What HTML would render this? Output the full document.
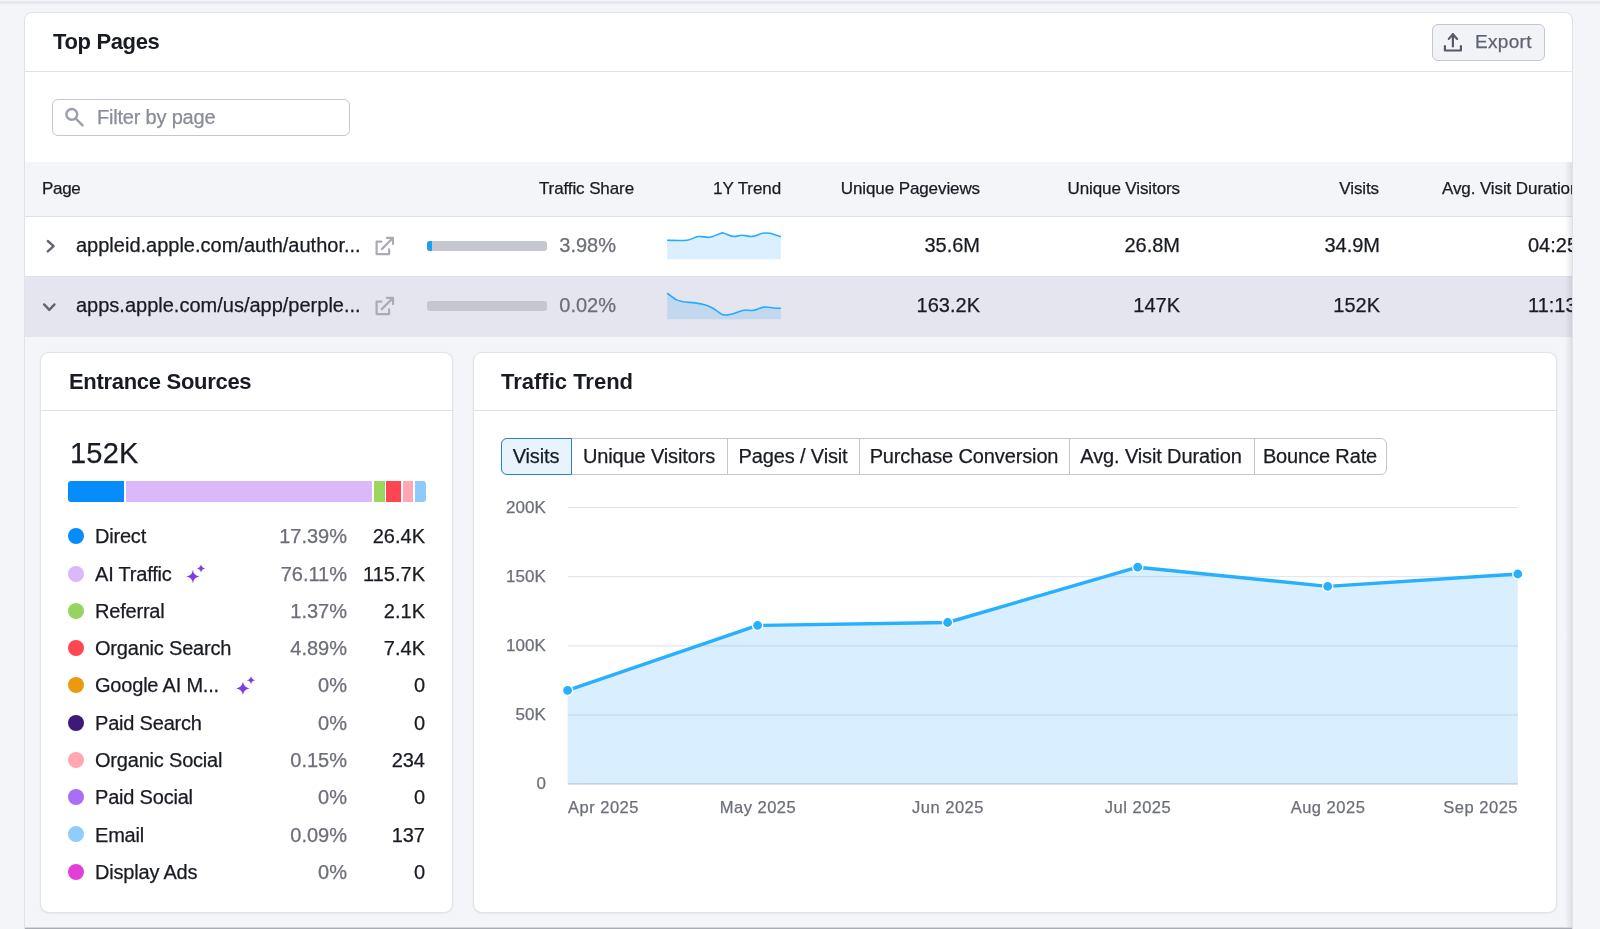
<!DOCTYPE html><html><head><meta charset="utf-8"><title>Top Pages</title><style>
html,body{margin:0;padding:0;} body{width:1600px;height:929px;overflow:hidden;position:relative;background:#f4f5f9;font-family:"Liberation Sans", sans-serif;}
.t{position:absolute;white-space:nowrap;will-change:transform;}
svg{position:absolute;left:0;top:0;overflow:visible;}
</style></head><body>
<div style="position:absolute;left:0px;top:1px;width:1600px;height:1px;background:#e9eaef;"></div>
<div style="position:absolute;left:0px;top:2px;width:1600px;height:1px;background:#e2e3e8;"></div>
<div style="position:absolute;left:0px;top:3px;width:1600px;height:2px;background:linear-gradient(#e8e9ee,#f4f5f9);"></div>
<div style="position:absolute;left:24px;top:12px;width:1549px;height:1000px;box-sizing:border-box;background:#fff;border:1px solid #e0e1e9;border-radius:8px;"></div>
<div style="position:absolute;left:25px;top:71px;width:1547px;height:1px;background:#e0e1e9;"></div>
<div class="t" style="left:52.70px;top:31.10px;font-size:22px;line-height:22px;color:#191b23;font-weight:bold;letter-spacing:-0.35px;">Top Pages</div>
<div style="position:absolute;left:1432px;top:24px;width:113px;height:37px;box-sizing:border-box;background:#f2f3f6;border:1px solid #c4c7cf;border-radius:6px;"></div>
<div class="t" style="left:1475.30px;top:31.95px;font-size:19px;line-height:19px;color:#5f6270;-webkit-text-stroke:0.25px currentColor;letter-spacing:0.3px;">Export</div>
<svg width="1600" height="929" style="pointer-events:none"><g fill="none" stroke="#575a68" stroke-width="2.2" stroke-linecap="round" stroke-linejoin="round"><path d="M1452.9 46.5V34.2M1448.8 38.9L1452.9 34.2L1457.1 38.9"/><path d="M1444.9 46.2V50.5H1460.9V46.2"/></g></svg>
<div style="position:absolute;left:52px;top:99px;width:298px;height:37px;box-sizing:border-box;background:#fff;border:1px solid #c4c7cf;border-radius:6px;"></div>
<div class="t" style="left:97.00px;top:107.00px;font-size:20px;line-height:20px;color:#898c99;-webkit-text-stroke:0.25px currentColor;letter-spacing:-0.2px;">Filter by page</div>
<svg width="1600" height="929"><g fill="none" stroke="#9c9eab" stroke-width="2.4" stroke-linecap="round"><circle cx="71.8" cy="114.4" r="5.4"/><path d="M76.3 119.2L82.6 125.4"/></g></svg>
<div style="position:absolute;left:0;top:0;width:1572px;height:929px;overflow:hidden;">
<div style="position:absolute;left:25px;top:162px;width:1547px;height:54px;background:#f4f5f9;"></div>
<div style="position:absolute;left:25px;top:216px;width:1547px;height:1px;background:#e0e1e9;"></div>
<div style="position:absolute;left:25px;top:217px;width:1547px;height:59px;background:#fff;"></div>
<div style="position:absolute;left:25px;top:276px;width:1547px;height:1px;background:#dedfe7;"></div>
<div style="position:absolute;left:25px;top:277px;width:1547px;height:60px;background:#e4e5ee;"></div>
<div style="position:absolute;left:25px;top:337px;width:1547px;height:590px;background:#f4f5f9;"></div>
<div class="t" style="left:42.00px;top:179.85px;font-size:17px;line-height:17px;color:#191b23;-webkit-text-stroke:0.25px currentColor;letter-spacing:-0.3px;">Page</div>
<div class="t" style="left:34.40px;width:600px;text-align:right;top:179.85px;font-size:17px;line-height:17px;color:#191b23;-webkit-text-stroke:0.25px currentColor;letter-spacing:-0.1px;">Traffic Share</div>
<div class="t" style="left:180.90px;width:600px;text-align:right;top:179.85px;font-size:17px;line-height:17px;color:#191b23;-webkit-text-stroke:0.25px currentColor;letter-spacing:-0.1px;">1Y Trend</div>
<div class="t" style="left:380.40px;width:600px;text-align:right;top:179.85px;font-size:17px;line-height:17px;color:#191b23;-webkit-text-stroke:0.25px currentColor;letter-spacing:-0.1px;">Unique Pageviews</div>
<div class="t" style="left:579.90px;width:600px;text-align:right;top:179.85px;font-size:17px;line-height:17px;color:#191b23;-webkit-text-stroke:0.25px currentColor;letter-spacing:-0.1px;">Unique Visitors</div>
<div class="t" style="left:779.40px;width:600px;text-align:right;top:179.85px;font-size:17px;line-height:17px;color:#191b23;-webkit-text-stroke:0.25px currentColor;letter-spacing:-0.1px;">Visits</div>
<div class="t" style="left:1442.00px;top:179.85px;font-size:17px;line-height:17px;color:#191b23;-webkit-text-stroke:0.25px currentColor;letter-spacing:-0.1px;">Avg. Visit Duration</div>
<div class="t" style="left:76.00px;top:235.20px;font-size:20px;line-height:20px;color:#191b23;-webkit-text-stroke:0.25px currentColor;">appleid.apple.com/auth/author...</div>
<div class="t" style="left:15.50px;width:600px;text-align:right;top:235.20px;font-size:20px;line-height:20px;color:#6c6e79;-webkit-text-stroke:0.25px currentColor;">3.98%</div>
<div class="t" style="left:379.50px;width:600px;text-align:right;top:235.20px;font-size:20px;line-height:20px;color:#191b23;-webkit-text-stroke:0.25px currentColor;">35.6M</div>
<div class="t" style="left:580.00px;width:600px;text-align:right;top:235.20px;font-size:20px;line-height:20px;color:#191b23;-webkit-text-stroke:0.25px currentColor;">26.8M</div>
<div class="t" style="left:779.50px;width:600px;text-align:right;top:235.20px;font-size:20px;line-height:20px;color:#191b23;-webkit-text-stroke:0.25px currentColor;">34.9M</div>
<div class="t" style="left:1527.50px;top:235.20px;font-size:20px;line-height:20px;color:#191b23;-webkit-text-stroke:0.25px currentColor;">04:25</div>
<div class="t" style="left:76.00px;top:295.10px;font-size:20px;line-height:20px;color:#191b23;-webkit-text-stroke:0.25px currentColor;">apps.apple.com/us/app/perple...</div>
<div class="t" style="left:15.50px;width:600px;text-align:right;top:295.10px;font-size:20px;line-height:20px;color:#6c6e79;-webkit-text-stroke:0.25px currentColor;">0.02%</div>
<div class="t" style="left:379.50px;width:600px;text-align:right;top:295.10px;font-size:20px;line-height:20px;color:#191b23;-webkit-text-stroke:0.25px currentColor;">163.2K</div>
<div class="t" style="left:580.00px;width:600px;text-align:right;top:295.10px;font-size:20px;line-height:20px;color:#191b23;-webkit-text-stroke:0.25px currentColor;">147K</div>
<div class="t" style="left:779.50px;width:600px;text-align:right;top:295.10px;font-size:20px;line-height:20px;color:#191b23;-webkit-text-stroke:0.25px currentColor;">152K</div>
<div class="t" style="left:1527.50px;top:295.10px;font-size:20px;line-height:20px;color:#191b23;-webkit-text-stroke:0.25px currentColor;">11:13</div>
<div style="position:absolute;left:427px;top:241px;width:120px;height:10px;background:#c4c7cf;border-radius:3px;"></div>
<div style="position:absolute;left:427px;top:241px;width:5px;height:10px;background:#1d9ff5;border-radius:3px 0 0 3px;"></div>
<div style="position:absolute;left:427px;top:301px;width:120px;height:10px;background:#c4c7cf;border-radius:3px;"></div>
<svg width="1600" height="929"><g fill="none" stroke="#62656f" stroke-width="2.4" stroke-linecap="round" stroke-linejoin="round"><path d="M47.8 241L53.6 246.2L47.8 251.4"/><path d="M44.1 304.4L49.3 309.9L54.5 304.4"/></g><g fill="none" stroke="#a9abb6" stroke-width="2.2" stroke-linecap="round" stroke-linejoin="round" transform="translate(0 0)"><path d="M381.5 241.6H376.6V254.1H389.1V249.4"/><path d="M381.8 249.1L392.6 238.3M386.9 237.9H393V244"/></g><g fill="none" stroke="#a9abb6" stroke-width="2.2" stroke-linecap="round" stroke-linejoin="round" transform="translate(0 60)"><path d="M381.5 241.6H376.6V254.1H389.1V249.4"/><path d="M381.8 249.1L392.6 238.3M386.9 237.9H393V244"/></g><path d="M667.1 240.3 C670.4 240.3 681.6 240.9 686.8 240.3 C692.0 239.7 694.4 237.0 698.2 236.5 C702.0 236.0 705.8 237.8 709.6 237.3 C713.4 236.8 718.5 234.0 720.9 233.3 C723.3 232.6 722.2 232.8 724.2 233.3 C726.2 233.8 730.1 236.1 733.1 236.4 C736.1 236.7 738.8 235.3 742.0 235.3 C745.2 235.3 749.2 236.7 752.6 236.4 C756.0 236.1 759.5 233.8 762.4 233.3 C765.2 232.8 766.6 232.7 769.7 233.3 C772.8 233.9 779.0 236.2 780.9 236.8 L780.9 259.2 L667.1 259.2 Z" fill="rgba(0,143,248,0.14)"/><path d="M667.1 240.3 C670.4 240.3 681.6 240.9 686.8 240.3 C692.0 239.7 694.4 237.0 698.2 236.5 C702.0 236.0 705.8 237.8 709.6 237.3 C713.4 236.8 718.5 234.0 720.9 233.3 C723.3 232.6 722.2 232.8 724.2 233.3 C726.2 233.8 730.1 236.1 733.1 236.4 C736.1 236.7 738.8 235.3 742.0 235.3 C745.2 235.3 749.2 236.7 752.6 236.4 C756.0 236.1 759.5 233.8 762.4 233.3 C765.2 232.8 766.6 232.7 769.7 233.3 C772.8 233.9 779.0 236.2 780.9 236.8" fill="none" stroke="#22aefc" stroke-width="1.6"/><path d="M667.1 293.1 C668.6 294.2 673.5 298.2 676.2 299.6 C679.0 301.0 680.5 301.1 683.6 301.7 C686.7 302.2 691.2 302.4 694.9 302.9 C698.5 303.4 702.6 304.1 705.5 304.9 C708.4 305.7 709.3 306.1 712.0 307.7 C714.7 309.2 719.1 313.0 721.7 314.2 C724.3 315.4 725.5 315.0 727.4 314.9 C729.3 314.8 730.4 314.6 733.1 313.8 C735.8 313.0 740.3 310.8 743.7 310.2 C747.1 309.6 750.0 310.9 753.4 310.4 C756.8 309.9 760.6 307.5 764.0 307.1 C767.4 306.7 770.9 307.8 773.7 308.0 C776.5 308.2 779.7 308.2 780.9 308.2 L780.9 319.2 L667.1 319.2 Z" fill="rgba(0,143,248,0.14)"/><path d="M667.1 293.1 C668.6 294.2 673.5 298.2 676.2 299.6 C679.0 301.0 680.5 301.1 683.6 301.7 C686.7 302.2 691.2 302.4 694.9 302.9 C698.5 303.4 702.6 304.1 705.5 304.9 C708.4 305.7 709.3 306.1 712.0 307.7 C714.7 309.2 719.1 313.0 721.7 314.2 C724.3 315.4 725.5 315.0 727.4 314.9 C729.3 314.8 730.4 314.6 733.1 313.8 C735.8 313.0 740.3 310.8 743.7 310.2 C747.1 309.6 750.0 310.9 753.4 310.4 C756.8 309.9 760.6 307.5 764.0 307.1 C767.4 306.7 770.9 307.8 773.7 308.0 C776.5 308.2 779.7 308.2 780.9 308.2" fill="none" stroke="#22aefc" stroke-width="1.6"/></svg>
<div style="position:absolute;left:1565px;top:162px;width:7px;height:765px;background:linear-gradient(to right, rgba(25,27,35,0), rgba(25,27,35,0.10));"></div>
</div>
<div style="position:absolute;left:25px;top:927px;width:1547px;height:1px;background:#d5d6de;"></div>
<div style="position:absolute;left:25px;top:928px;width:1547px;height:1px;background:#a9abb6;"></div>
<div style="position:absolute;left:40px;top:352px;width:413px;height:561px;box-sizing:border-box;background:#fff;border:1px solid #e2e3e9;border-radius:9px;box-shadow:0 0 1px rgba(25,27,35,0.10), 0 1px 2px rgba(25,27,35,0.05);"></div>
<div style="position:absolute;left:41px;top:410px;width:411px;height:1px;background:#e0e1e9;"></div>
<div class="t" style="left:69.00px;top:370.90px;font-size:22px;line-height:22px;color:#191b23;font-weight:bold;letter-spacing:-0.3px;">Entrance Sources</div>
<div class="t" style="left:69.50px;top:439.05px;font-size:29px;line-height:29px;color:#191b23;-webkit-text-stroke:0.25px currentColor;letter-spacing:0.2px;">152K</div>
<div style="position:absolute;left:68px;top:481px;width:56.3px;height:20.5px;background:#078cfb;border-radius:3px 0 0 3px;"></div>
<div style="position:absolute;left:126px;top:481px;width:246px;height:20.5px;background:#dab8fa;border-radius:0;"></div>
<div style="position:absolute;left:373.5px;top:481px;width:11.0px;height:20.5px;background:#9ad85d;border-radius:0;"></div>
<div style="position:absolute;left:386px;top:481px;width:15px;height:20.5px;background:#ff4554;border-radius:0;"></div>
<div style="position:absolute;left:403px;top:481px;width:10px;height:20.5px;background:#ffa8b1;border-radius:0;"></div>
<div style="position:absolute;left:414.8px;top:481px;width:11.0px;height:20.5px;background:#8ecbfd;border-radius:0 3px 3px 0;"></div>
<div style="position:absolute;left:68px;top:528.25px;width:16px;height:16px;background:#078cfb;border-radius:50%;"></div>
<div class="t" style="left:95.00px;top:526.45px;font-size:20px;line-height:20px;color:#191b23;-webkit-text-stroke:0.25px currentColor;letter-spacing:-0.2px;">Direct</div>
<div class="t" style="left:-252.80px;width:600px;text-align:right;top:526.45px;font-size:20px;line-height:20px;color:#6c6e79;-webkit-text-stroke:0.25px currentColor;">17.39%</div>
<div class="t" style="left:-175.00px;width:600px;text-align:right;top:526.45px;font-size:20px;line-height:20px;color:#191b23;-webkit-text-stroke:0.25px currentColor;">26.4K</div>
<div style="position:absolute;left:68px;top:565.51px;width:16px;height:16px;background:#dab8fa;border-radius:50%;"></div>
<div class="t" style="left:95.00px;top:563.71px;font-size:20px;line-height:20px;color:#191b23;-webkit-text-stroke:0.25px currentColor;letter-spacing:-0.2px;">AI Traffic</div>
<div class="t" style="left:-252.80px;width:600px;text-align:right;top:563.71px;font-size:20px;line-height:20px;color:#6c6e79;-webkit-text-stroke:0.25px currentColor;">76.11%</div>
<div class="t" style="left:-175.00px;width:600px;text-align:right;top:563.71px;font-size:20px;line-height:20px;color:#191b23;-webkit-text-stroke:0.25px currentColor;">115.7K</div>
<div style="position:absolute;left:68px;top:602.77px;width:16px;height:16px;background:#95d45e;border-radius:50%;"></div>
<div class="t" style="left:95.00px;top:600.97px;font-size:20px;line-height:20px;color:#191b23;-webkit-text-stroke:0.25px currentColor;letter-spacing:-0.2px;">Referral</div>
<div class="t" style="left:-252.80px;width:600px;text-align:right;top:600.97px;font-size:20px;line-height:20px;color:#6c6e79;-webkit-text-stroke:0.25px currentColor;">1.37%</div>
<div class="t" style="left:-175.00px;width:600px;text-align:right;top:600.97px;font-size:20px;line-height:20px;color:#191b23;-webkit-text-stroke:0.25px currentColor;">2.1K</div>
<div style="position:absolute;left:68px;top:640.03px;width:16px;height:16px;background:#ff4753;border-radius:50%;"></div>
<div class="t" style="left:95.00px;top:638.23px;font-size:20px;line-height:20px;color:#191b23;-webkit-text-stroke:0.25px currentColor;letter-spacing:-0.2px;">Organic Search</div>
<div class="t" style="left:-252.80px;width:600px;text-align:right;top:638.23px;font-size:20px;line-height:20px;color:#6c6e79;-webkit-text-stroke:0.25px currentColor;">4.89%</div>
<div class="t" style="left:-175.00px;width:600px;text-align:right;top:638.23px;font-size:20px;line-height:20px;color:#191b23;-webkit-text-stroke:0.25px currentColor;">7.4K</div>
<div style="position:absolute;left:68px;top:677.29px;width:16px;height:16px;background:#ea9a0c;border-radius:50%;"></div>
<div class="t" style="left:95.00px;top:675.49px;font-size:20px;line-height:20px;color:#191b23;-webkit-text-stroke:0.25px currentColor;letter-spacing:-0.2px;">Google AI M...</div>
<div class="t" style="left:-252.80px;width:600px;text-align:right;top:675.49px;font-size:20px;line-height:20px;color:#6c6e79;-webkit-text-stroke:0.25px currentColor;">0%</div>
<div class="t" style="left:-175.00px;width:600px;text-align:right;top:675.49px;font-size:20px;line-height:20px;color:#191b23;-webkit-text-stroke:0.25px currentColor;">0</div>
<div style="position:absolute;left:68px;top:714.55px;width:16px;height:16px;background:#3d1a7a;border-radius:50%;"></div>
<div class="t" style="left:95.00px;top:712.75px;font-size:20px;line-height:20px;color:#191b23;-webkit-text-stroke:0.25px currentColor;letter-spacing:-0.2px;">Paid Search</div>
<div class="t" style="left:-252.80px;width:600px;text-align:right;top:712.75px;font-size:20px;line-height:20px;color:#6c6e79;-webkit-text-stroke:0.25px currentColor;">0%</div>
<div class="t" style="left:-175.00px;width:600px;text-align:right;top:712.75px;font-size:20px;line-height:20px;color:#191b23;-webkit-text-stroke:0.25px currentColor;">0</div>
<div style="position:absolute;left:68px;top:751.81px;width:16px;height:16px;background:#ffa8ae;border-radius:50%;"></div>
<div class="t" style="left:95.00px;top:750.01px;font-size:20px;line-height:20px;color:#191b23;-webkit-text-stroke:0.25px currentColor;letter-spacing:-0.2px;">Organic Social</div>
<div class="t" style="left:-252.80px;width:600px;text-align:right;top:750.01px;font-size:20px;line-height:20px;color:#6c6e79;-webkit-text-stroke:0.25px currentColor;">0.15%</div>
<div class="t" style="left:-175.00px;width:600px;text-align:right;top:750.01px;font-size:20px;line-height:20px;color:#191b23;-webkit-text-stroke:0.25px currentColor;">234</div>
<div style="position:absolute;left:68px;top:789.07px;width:16px;height:16px;background:#a86ef5;border-radius:50%;"></div>
<div class="t" style="left:95.00px;top:787.27px;font-size:20px;line-height:20px;color:#191b23;-webkit-text-stroke:0.25px currentColor;letter-spacing:-0.2px;">Paid Social</div>
<div class="t" style="left:-252.80px;width:600px;text-align:right;top:787.27px;font-size:20px;line-height:20px;color:#6c6e79;-webkit-text-stroke:0.25px currentColor;">0%</div>
<div class="t" style="left:-175.00px;width:600px;text-align:right;top:787.27px;font-size:20px;line-height:20px;color:#191b23;-webkit-text-stroke:0.25px currentColor;">0</div>
<div style="position:absolute;left:68px;top:826.33px;width:16px;height:16px;background:#8ecdfd;border-radius:50%;"></div>
<div class="t" style="left:95.00px;top:824.53px;font-size:20px;line-height:20px;color:#191b23;-webkit-text-stroke:0.25px currentColor;letter-spacing:-0.2px;">Email</div>
<div class="t" style="left:-252.80px;width:600px;text-align:right;top:824.53px;font-size:20px;line-height:20px;color:#6c6e79;-webkit-text-stroke:0.25px currentColor;">0.09%</div>
<div class="t" style="left:-175.00px;width:600px;text-align:right;top:824.53px;font-size:20px;line-height:20px;color:#191b23;-webkit-text-stroke:0.25px currentColor;">137</div>
<div style="position:absolute;left:68px;top:863.59px;width:16px;height:16px;background:#e040d8;border-radius:50%;"></div>
<div class="t" style="left:95.00px;top:861.79px;font-size:20px;line-height:20px;color:#191b23;-webkit-text-stroke:0.25px currentColor;letter-spacing:-0.2px;">Display Ads</div>
<div class="t" style="left:-252.80px;width:600px;text-align:right;top:861.79px;font-size:20px;line-height:20px;color:#6c6e79;-webkit-text-stroke:0.25px currentColor;">0%</div>
<div class="t" style="left:-175.00px;width:600px;text-align:right;top:861.79px;font-size:20px;line-height:20px;color:#191b23;-webkit-text-stroke:0.25px currentColor;">0</div>
<svg width="1600" height="929"><path fill="#7b3fe4" d="M192.9 570.01 Q193.824 575.686 199.5 576.61 Q193.824 577.534 192.9 583.21 Q191.976 577.534 186.3 576.61 Q191.976 575.686 192.9 570.01Z M201.0 564.31 Q201.588 567.922 205.2 568.51 Q201.588 569.098 201.0 572.71 Q200.412 569.098 196.8 568.51 Q200.412 567.922 201.0 564.31Z"/><path fill="#7b3fe4" d="M242.9 681.79 Q243.824 687.466 249.5 688.39 Q243.824 689.314 242.9 694.99 Q241.976 689.314 236.3 688.39 Q241.976 687.466 242.9 681.79Z M251.0 676.0899999999999 Q251.588 679.702 255.2 680.29 Q251.588 680.8779999999999 251.0 684.49 Q250.412 680.8779999999999 246.8 680.29 Q250.412 679.702 251.0 676.0899999999999Z"/></svg>
<div style="position:absolute;left:473px;top:352px;width:1084px;height:561px;box-sizing:border-box;background:#fff;border:1px solid #e2e3e9;border-radius:9px;box-shadow:0 0 1px rgba(25,27,35,0.10), 0 1px 2px rgba(25,27,35,0.05);"></div>
<div style="position:absolute;left:474px;top:410px;width:1082px;height:1px;background:#e0e1e9;"></div>
<div class="t" style="left:501.00px;top:371.10px;font-size:22px;line-height:22px;color:#191b23;font-weight:bold;">Traffic Trend</div>
<div style="position:absolute;left:501px;top:438px;width:886px;height:37px;box-sizing:border-box;border:1px solid #c4c7cf;border-radius:6px;background:#fff;"></div>
<div style="position:absolute;left:727px;top:438px;width:1px;height:37px;background:#c4c7cf;"></div>
<div style="position:absolute;left:859px;top:438px;width:1px;height:37px;background:#c4c7cf;"></div>
<div style="position:absolute;left:1069px;top:438px;width:1px;height:37px;background:#c4c7cf;"></div>
<div style="position:absolute;left:1254px;top:438px;width:1px;height:37px;background:#c4c7cf;"></div>
<div style="position:absolute;left:501px;top:438px;width:71px;height:37px;box-sizing:border-box;border:1px solid #2a7fd6;border-radius:6px 0 0 6px;background:#e9f3fd;"></div>
<div class="t" style="left:235.94px;width:600px;text-align:center;top:446.10px;font-size:20px;line-height:20px;color:#191b23;-webkit-text-stroke:0.25px currentColor;letter-spacing:-0.13px;">Visits</div>
<div class="t" style="left:348.94px;width:600px;text-align:center;top:446.10px;font-size:20px;line-height:20px;color:#191b23;-webkit-text-stroke:0.25px currentColor;letter-spacing:-0.13px;">Unique Visitors</div>
<div class="t" style="left:492.94px;width:600px;text-align:center;top:446.10px;font-size:20px;line-height:20px;color:#191b23;-webkit-text-stroke:0.25px currentColor;letter-spacing:-0.13px;">Pages / Visit</div>
<div class="t" style="left:663.93px;width:600px;text-align:center;top:446.10px;font-size:20px;line-height:20px;color:#191b23;-webkit-text-stroke:0.25px currentColor;letter-spacing:-0.13px;">Purchase Conversion</div>
<div class="t" style="left:861.43px;width:600px;text-align:center;top:446.10px;font-size:20px;line-height:20px;color:#191b23;-webkit-text-stroke:0.25px currentColor;letter-spacing:-0.13px;">Avg. Visit Duration</div>
<div class="t" style="left:1020.43px;width:600px;text-align:center;top:446.10px;font-size:20px;line-height:20px;color:#191b23;-webkit-text-stroke:0.25px currentColor;letter-spacing:-0.13px;">Bounce Rate</div>
<svg width="1600" height="929"><rect x="568" y="507.1" width="950" height="1" fill="#e0e1e9"/><rect x="568" y="576.2" width="950" height="1" fill="#e0e1e9"/><rect x="568" y="645.4" width="950" height="1" fill="#e0e1e9"/><rect x="568" y="714.5" width="950" height="1" fill="#e0e1e9"/><rect x="568" y="783.5" width="950" height="1" fill="#e0e1e9"/><path d="M567.6 690.4 L757.6 625.4 L947.6 622.5 L1137.7 567.2 L1327.7 586.4 L1517.8 574.0 L1517.8 784 L567.6 784Z" fill="rgba(0,143,248,0.15)"/><rect x="568" y="783.5" width="950" height="1" fill="rgba(120,150,190,0.35)"/><path d="M567.6 690.4 L757.6 625.4 L947.6 622.5 L1137.7 567.2 L1327.7 586.4 L1517.8 574.0" fill="none" stroke="#26b0fe" stroke-width="3.4" stroke-linejoin="round"/><circle cx="567.6" cy="690.4" r="5.1" fill="#26b0fe" stroke="#fff" stroke-width="1.4"/><circle cx="757.6" cy="625.4" r="5.1" fill="#26b0fe" stroke="#fff" stroke-width="1.4"/><circle cx="947.6" cy="622.5" r="5.1" fill="#26b0fe" stroke="#fff" stroke-width="1.4"/><circle cx="1137.7" cy="567.2" r="5.1" fill="#26b0fe" stroke="#fff" stroke-width="1.4"/><circle cx="1327.7" cy="586.4" r="5.1" fill="#26b0fe" stroke="#fff" stroke-width="1.4"/><circle cx="1517.8" cy="574.0" r="5.1" fill="#26b0fe" stroke="#fff" stroke-width="1.4"/></svg>
<div class="t" style="left:-53.90px;width:600px;text-align:right;top:498.75px;font-size:17px;line-height:17px;color:#6c6e79;-webkit-text-stroke:0.25px currentColor;letter-spacing:0.1px;">200K</div>
<div class="t" style="left:-53.90px;width:600px;text-align:right;top:567.85px;font-size:17px;line-height:17px;color:#6c6e79;-webkit-text-stroke:0.25px currentColor;letter-spacing:0.1px;">150K</div>
<div class="t" style="left:-53.90px;width:600px;text-align:right;top:637.05px;font-size:17px;line-height:17px;color:#6c6e79;-webkit-text-stroke:0.25px currentColor;letter-spacing:0.1px;">100K</div>
<div class="t" style="left:-53.90px;width:600px;text-align:right;top:706.15px;font-size:17px;line-height:17px;color:#6c6e79;-webkit-text-stroke:0.25px currentColor;letter-spacing:0.1px;">50K</div>
<div class="t" style="left:-53.90px;width:600px;text-align:right;top:775.15px;font-size:17px;line-height:17px;color:#6c6e79;-webkit-text-stroke:0.25px currentColor;letter-spacing:0.1px;">0</div>
<div class="t" style="left:568.40px;top:799.18px;font-size:16.5px;line-height:16.5px;color:#6c6e79;-webkit-text-stroke:0.25px currentColor;letter-spacing:0.5px;">Apr 2025</div>
<div class="t" style="left:457.85px;width:600px;text-align:center;top:799.18px;font-size:16.5px;line-height:16.5px;color:#6c6e79;-webkit-text-stroke:0.25px currentColor;letter-spacing:0.5px;">May 2025</div>
<div class="t" style="left:647.85px;width:600px;text-align:center;top:799.18px;font-size:16.5px;line-height:16.5px;color:#6c6e79;-webkit-text-stroke:0.25px currentColor;letter-spacing:0.5px;">Jun 2025</div>
<div class="t" style="left:837.95px;width:600px;text-align:center;top:799.18px;font-size:16.5px;line-height:16.5px;color:#6c6e79;-webkit-text-stroke:0.25px currentColor;letter-spacing:0.5px;">Jul 2025</div>
<div class="t" style="left:1027.95px;width:600px;text-align:center;top:799.18px;font-size:16.5px;line-height:16.5px;color:#6c6e79;-webkit-text-stroke:0.25px currentColor;letter-spacing:0.5px;">Aug 2025</div>
<div class="t" style="left:918.30px;width:600px;text-align:right;top:799.18px;font-size:16.5px;line-height:16.5px;color:#6c6e79;-webkit-text-stroke:0.25px currentColor;letter-spacing:0.5px;">Sep 2025</div>
</body></html>
